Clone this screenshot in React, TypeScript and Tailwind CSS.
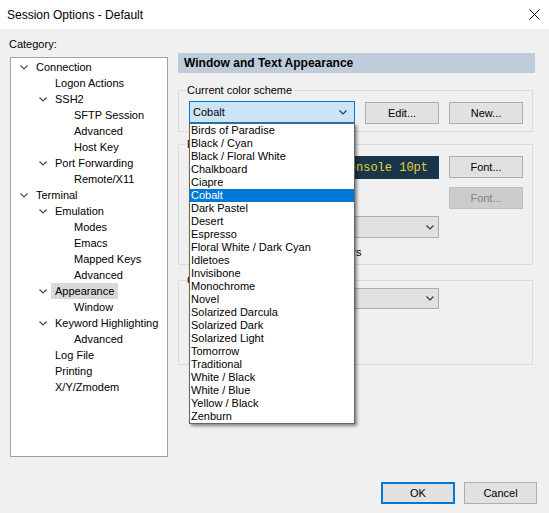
import React from "react";

const TREE: [number, string, boolean][] = [
  [0, "Connection", true],
  [1, "Logon Actions", false],
  [1, "SSH2", true],
  [2, "SFTP Session", false],
  [2, "Advanced", false],
  [2, "Host Key", false],
  [1, "Port Forwarding", true],
  [2, "Remote/X11", false],
  [0, "Terminal", true],
  [1, "Emulation", true],
  [2, "Modes", false],
  [2, "Emacs", false],
  [2, "Mapped Keys", false],
  [2, "Advanced", false],
  [1, "Appearance", true],
  [2, "Window", false],
  [1, "Keyword Highlighting", true],
  [2, "Advanced", false],
  [1, "Log File", false],
  [1, "Printing", false],
  [1, "X/Y/Zmodem", false],
];

const INDENT = ["pl-[4px]", "pl-[23px]", "pl-[42px]"];

const SCHEMES = [
  "Birds of Paradise",
  "Black / Cyan",
  "Black / Floral White",
  "Chalkboard",
  "Ciapre",
  "Cobalt",
  "Dark Pastel",
  "Desert",
  "Espresso",
  "Floral White / Dark Cyan",
  "Idletoes",
  "Invisibone",
  "Monochrome",
  "Novel",
  "Solarized Darcula",
  "Solarized Dark",
  "Solarized Light",
  "Tomorrow",
  "Traditional",
  "White / Black",
  "White / Blue",
  "Yellow / Black",
  "Zenburn",
];

function Chevron({ color = "#444" }: { color?: string }) {
  return (
    <svg width="8" height="5" viewBox="0 0 8 5" fill="none">
      <path d="M0.5 0.5 L4 4 L7.5 0.5" stroke={color} strokeWidth="1.1" />
    </svg>
  );
}

function Button({ label, disabled, wide }: { label: string; disabled?: boolean; wide?: boolean }) {
  return (
    <div
      className={
        "flex h-[22px] items-center justify-center border " +
        (wide ? "w-[74px] " : "w-[73px] ") +
        (disabled ? "border-[#bfbfbf] bg-[#cccccc] text-[#838383]" : "border-[#adadad] bg-[#e1e1e1] text-black")
      }
    >
      {label}
    </div>
  );
}

function Group({ label, className, children }: { label: string; className: string; children?: React.ReactNode }) {
  return (
    <div className={"relative mr-[2px] border border-[#dcdcdc] " + className}>
      {/* caption sits on the top border */}
      <span className="absolute -top-[9px] left-[7px] bg-[#f0f0f0] px-[1px] leading-[16px]">{label}</span>
      {children}
    </div>
  );
}

export default function App() {
  return (
    <div className="flex h-[513px] w-[549px] flex-col bg-[#f0f0f0] font-['Segoe_UI','Liberation_Sans',Arial,sans-serif] text-[11px] text-black">
      {/* title bar */}
      <div className="flex h-[29px] items-center justify-between bg-white pl-[7px] pr-[9px] text-[12px]">
        <span>Session Options - Default</span>
        <svg width="11" height="11" viewBox="0 0 11 11">
          <path d="M0.5 0.5 L10.5 10.5 M10.5 0.5 L0.5 10.5" stroke="#000" strokeWidth="1" />
        </svg>
      </div>

      <div className="flex">
        {/* category tree */}
        <div className="flex flex-col pl-[9px]">
          <div className="mt-[7px] leading-[16px]">Category:</div>
          <div className="ml-[1px] mt-[5px] h-[400px] w-[158px] border border-[#a0a0a0] bg-white pt-[1px]">
            {TREE.map(([level, text, open], i) => (
              <div key={i} className={"flex h-[16px] items-center " + INDENT[level]}>
                <div className="flex w-[17px] justify-center">{open && <Chevron />}</div>
                <span className={"px-[4px] leading-[16px] " + (text === "Appearance" ? "bg-[#d9d9d9]" : "")}>{text}</span>
              </div>
            ))}
          </div>
        </div>

        {/* right pane */}
        <div className="relative ml-[10px] mt-[24px] flex w-[357px] flex-col">
          <div className="flex h-[20px] items-center bg-[#bfcddb] pl-[6px] text-[12px] font-bold">Window and Text Appearance</div>

          <Group label="Current color scheme" className="mt-[17px] pb-[7px] pl-[10px] pt-[10px]">
            <div className="flex items-start gap-[10px]">
              <div className="flex h-[22px] w-[166px] items-center justify-between border border-[#0078d7] bg-[#cce4f7] pl-[3px] pr-[7px]">
                <span>Cobalt</span>
                <Chevron color="#333" />
              </div>
              <div className="mt-[1px] flex gap-[10px]">
                <Button label="Edit..." wide />
                <Button label="New..." wide />
              </div>
            </div>
          </Group>

          <Group label="Fonts" className="mt-[12px] h-[121px] pl-[10px] pt-[11px]">
            <div className="flex items-start gap-[10px]">
              <div className="flex h-[23px] w-[250px] items-center justify-end bg-[#193549] pr-[11px] font-['Liberation_Mono',monospace] text-[12px] text-[#e8d23a]">
                Lucida Console 10pt
              </div>
              <Button label="Font..." wide />
            </div>
            <div className="ml-[260px] mt-[8px]">
              <Button label="Font..." wide disabled />
            </div>
            <div className="mt-[7px] flex h-[22px] w-[250px] items-center justify-end border border-[#adadad] bg-[#e1e1e1] pr-[4px]">
              <Chevron color="#333" />
            </div>
            <div className="mt-[6px] flex items-center gap-[3px] leading-[16px]">
              <span className="h-[13px] w-[13px] border border-[#333] bg-white" />
              <span>Use Unicode graphic characters</span>
            </div>
          </Group>

          <Group label="Cursor" className="mt-[15px] h-[85px] pl-[10px] pt-[7px]">
            <div className="flex h-[21px] w-[250px] items-center justify-end border border-[#adadad] bg-[#e1e1e1] pr-[4px]">
              <Chevron color="#333" />
            </div>
          </Group>

          {/* open color scheme list */}
          <div className="absolute left-[11px] top-[70px] w-[166px] border border-[#646464] bg-white shadow-[2px_2px_3px_rgba(0,0,0,0.45)]">
            {SCHEMES.map((s) => (
              <div
                key={s}
                className={"h-[13px] pl-[1px] leading-[13px] " + (s === "Cobalt" ? "bg-[#0078d7] text-white" : "")}
              >
                {s}
              </div>
            ))}
          </div>
        </div>
      </div>

      {/* dialog buttons */}
      <div className="mt-[25px] flex justify-end gap-[9px] pr-[12px]">
        <div className="flex h-[22px] w-[74px] items-center justify-center border-2 border-[#0078d7] bg-[#e1e1e1]">OK</div>
        <Button label="Cancel" />
      </div>
    </div>
  );
}
